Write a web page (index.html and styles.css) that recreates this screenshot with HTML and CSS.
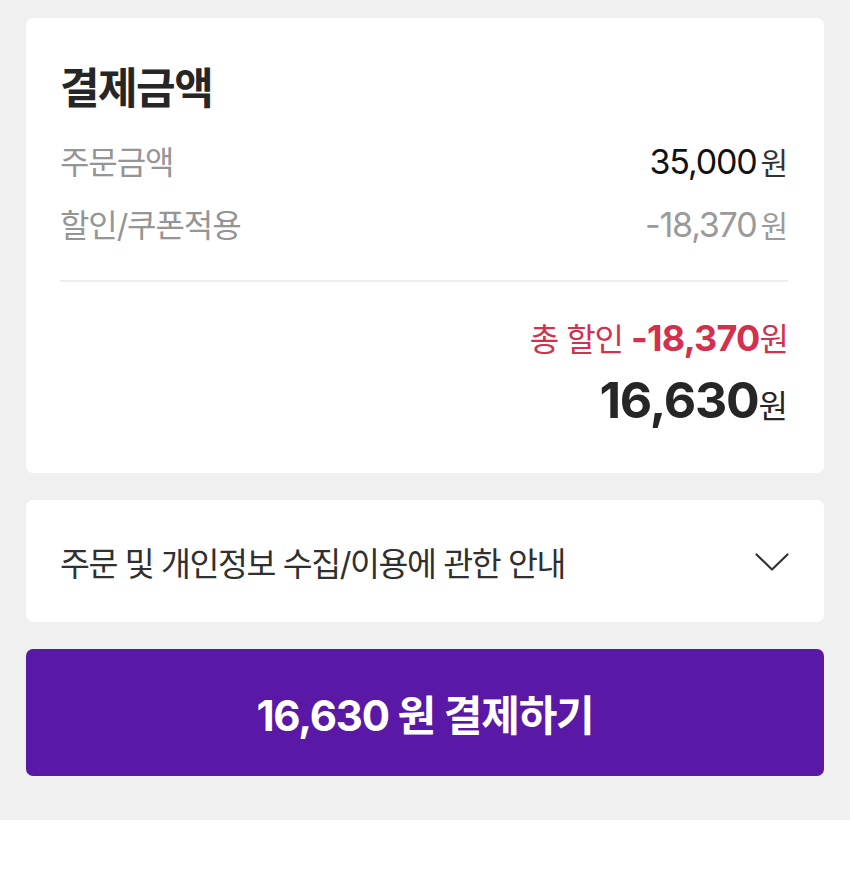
FILE: index.html
```html
<!DOCTYPE html>
<html lang="ko">
<head>
<meta charset="utf-8">
<link rel="stylesheet" href="styles.css">
</head>
<body>
<div class="page">
  <section class="card summary">
    <h2 class="title">결제금액</h2>
    <div class="row">
      <span class="label">주문금액</span>
      <span class="value">35,000<span class="won">원</span></span>
    </div>
    <div class="row">
      <span class="label">할인/쿠폰적용</span>
      <span class="value muted">-18,370<span class="won">원</span></span>
    </div>
    <hr class="divider">
    <div class="discount">총 할인 <b>-18,370</b>원</div>
    <div class="total"><b>16,630</b>원</div>
  </section>
  <section class="card notice">
    <span class="notice-text">주문 및 개인정보 수집/이용에 관한 안내</span>
    <svg class="chev" width="34" height="19" viewBox="0 0 34 19"><path d="M1.5 1.5 L17 16.5 L32.5 1.5" fill="none" stroke="#333" stroke-width="2.2" stroke-linecap="round" stroke-linejoin="round"/></svg>
  </section>
  <button class="pay">16,630 원 결제하기</button>
</div>
</body>
</html>
```
FILE: styles.css
```css
* { box-sizing: border-box; }
html, body { margin: 0; padding: 0; background: #fff; }
body { font-family: Inter, "Noto Sans CJK KR", sans-serif; color: #222; }
.page {
  background: #f0f0f0;
  padding: 18px 26px 44px;
  display: flex;
  flex-direction: column;
  gap: 27px;
}
.card { background: #fff; border-radius: 7px; }
.summary { padding: 45px 36px 45px 34px; display: flex; flex-direction: column; }
.title { margin: 0 0 18px; font-size: 43px; line-height: 50px; height: 50px; font-weight: 700; color: #262626; letter-spacing: -1.5px; }
.row { display: flex; justify-content: space-between; align-items: center; height: 63px; font-size: 32px; line-height: 40px; }
.label { color: #959595; letter-spacing: -1.1px; }
.value { color: #111; font-size: 34px; letter-spacing: -1.2px; }
.value .won { color: #333; margin-left: 4px; font-size: 30px; letter-spacing: 0; }
.value.muted { color: #9a9a9a; }
.value.muted .won { color: #9a9a9a; }
.divider { border: 0; height: 2px; background: #eeeeee; margin: 23px 0 0; }
.discount { margin-top: 36px; height: 40px; display: flex; justify-content: flex-end; align-items: baseline; font-size: 32px; line-height: 40px; color: #d2304d; letter-spacing: -1px; white-space: pre; }
.discount b { font-size: 36px; line-height: 40px; font-weight: 700; letter-spacing: -0.8px; }
.total { margin-top: 14px; height: 56px; display: flex; justify-content: flex-end; align-items: baseline; font-size: 32px; line-height: 56px; color: #262626; }
.total b { font-size: 50px; line-height: 56px; font-weight: 700; letter-spacing: -1.2px; }
.notice { height: 122px; padding: 0 35px 0 34px; display: flex; align-items: center; justify-content: space-between; }
.notice-text { font-size: 32.5px; color: #303030; letter-spacing: -1.4px; }
.chev { display: block; margin-top: 2px; }
.pay {
  height: 127px; border: 0; border-radius: 7px; background: #5a18a7; color: #fff;
  font-family: Inter, "Noto Sans CJK KR", sans-serif; font-size: 42px; font-weight: 700;
  letter-spacing: -1.2px; padding: 0; cursor: pointer;
}
```
